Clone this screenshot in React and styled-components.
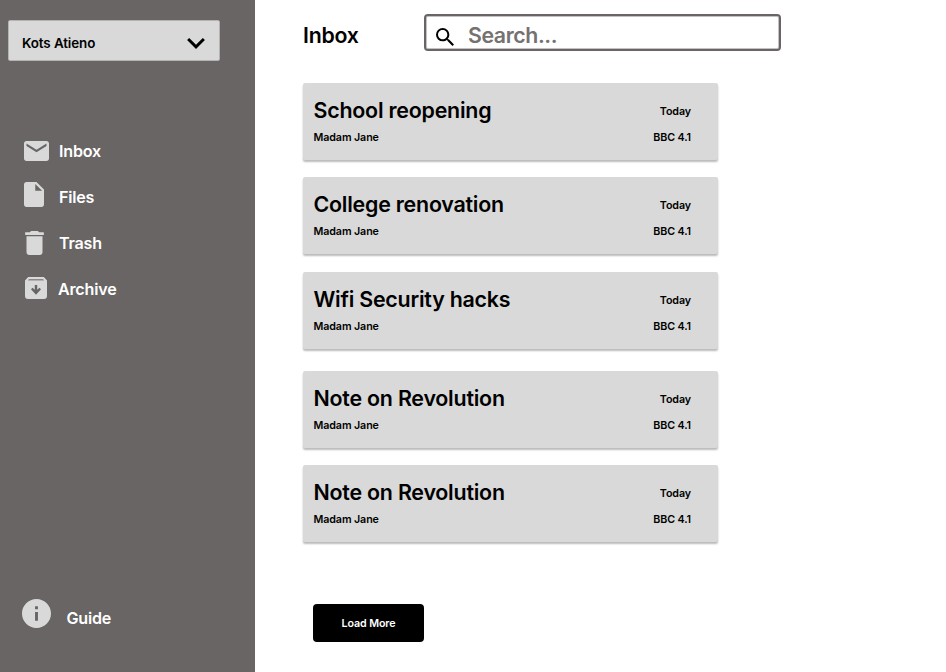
import React from "react";
import styled, { createGlobalStyle } from "styled-components";

const GlobalStyle = createGlobalStyle`
  * { box-sizing: border-box; }
  body { margin: 0; background: #fff; font-family: Inter, sans-serif; font-weight: 600; color: #000; }
  button, input { font: inherit; }
`;

const Page = styled.div`
  display: flex;
  width: 946px;
  height: 672px;
  overflow: hidden;
`;

const Sidebar = styled.aside`
  display: flex;
  flex-direction: column;
  flex: none;
  width: 255px;
  padding: 20px 35px 31px 8px;
  background: #696564;
`;

const AccountSelect = styled.button`
  display: flex;
  align-items: center;
  justify-content: space-between;
  width: 212px;
  height: 41px;
  padding: 5px 14px 0 13px;
  border: 1px solid #b5b3b2;
  border-radius: 2px;
  background: #d9d9d9;
  color: #000;
  font-size: 13.4px;
  letter-spacing: -0.1px;
  line-height: 20px;
`;

const Nav = styled.nav`
  display: flex;
  flex-direction: column;
  margin-top: 67px;
`;

const NavItem = styled.a`
  display: flex;
  align-items: center;
  height: 46px;
  color: #fff;
  font-size: 16.1px;
  letter-spacing: -0.2px;
  line-height: 20px;
`;

const IconSlot = styled.span`
  display: flex;
  flex: none;
  width: ${(p) => p.$width}px;
  padding-left: ${(p) => p.$inset}px;
  padding-bottom: ${(p) => p.$lift || 0}px;
`;

const Glyph = styled.svg`
  display: block;
  flex: none;
  fill: ${(p) => p.$color || "#d9d9d9"};
`;

const Guide = styled(NavItem)`
  margin-top: auto;
`;

const Main = styled.main`
  flex: 1;
  padding: 14px 0 0 48px;
`;

const Header = styled.header`
  display: flex;
  align-items: center;
  height: 37px;
`;

const Heading = styled.h1`
  width: 121px;
  margin: 5px 0 0;
  font-size: 21.3px;
  font-weight: 600;
  letter-spacing: -0.25px;
  line-height: 26px;
`;

const SearchBox = styled.label`
  display: flex;
  align-items: center;
  gap: 14px;
  width: 357px;
  height: 37px;
  padding: 8px 10px 0 10px;
  border: 2px solid #696564;
  border-radius: 4px;
  box-shadow: inset 0 0 0 1px #c3c1c1;
`;

const SearchInput = styled.input`
  flex: 1;
  min-width: 0;
  height: 26px;
  margin-top: -3px;
  padding: 0;
  border: 0;
  outline: 0;
  background: none;
  font-size: 21.3px;
  letter-spacing: -0.4px;
  &::placeholder { color: #757170; opacity: 1; }
`;

const MessageList = styled.div`
  display: flex;
  flex-direction: column;
  margin-top: 32px;
`;

const MessageCard = styled.article`
  display: grid;
  grid-template-columns: 1fr auto;
  grid-template-rows: 28px 27px;
  width: 415px;
  height: 77px;
  margin-bottom: ${(p) => p.$gap}px;
  padding: 13px 27px 0 10.5px;
  border-radius: 2px;
  background: #d9d9d9;
  box-shadow: 0 2px 2px rgba(0, 0, 0, 0.27);
`;

const Title = styled.h2`
  margin: 0;
  font-size: 21.4px;
  font-weight: 600;
  letter-spacing: -0.22px;
  line-height: 28px;
`;

const Meta = styled.span`
  font-size: 10.7px;
  letter-spacing: -0.1px;
  line-height: ${(p) => (p.$upper ? 32 : 27)}px;
  text-align: ${(p) => (p.$end ? "right" : "left")};
`;

const LoadMore = styled.button`
  display: block;
  width: 111px;
  height: 38px;
  margin: 61px 0 0 10px;
  padding: 1px 0 0;
  border: 0;
  border-radius: 4px;
  background: #000;
  color: #fff;
  font-size: 10.7px;
  letter-spacing: -0.1px;
`;

const icons = {
  mail: { box: "2 4 20 16", w: 25, h: 20, d: "M20 4H4c-1.1 0-2 .9-2 2v12c0 1.100.9 2 2 2h16c1.100 0 2-.9 2-2V6c0-1.100-.9-2-2-2zm0 4-8 5-8-5V6l8 5 8-5v2z" },
  file: { box: "4 2 16 20", w: 20, h: 25, d: "M6 2c-1.100 0-2 .9-2 2v16c0 1.100.9 2 2 2h12c1.100 0 2-.9 2-2V8l-6-6H6zm7 7V3.500L18.500 9H13z" },
  trash: { box: "5 3 14 18", w: 19, h: 24, d: "M6 19c0 1.100.9 2 2 2h8c1.100 0 2-.9 2-2V7H6v12zM19 4h-3.500l-1-1h-5l-1 1H5v2h14V4z" },
  archive: { box: "3 3 18 18", w: 22, h: 22 },
  info: { box: "2 2 20 20", w: 29, h: 29, d: "M12 2C6.480 2 2 6.480 2 12s4.480 10 10 10 10-4.480 10-10S17.520 2 12 2zm1 15h-2v-6h2v6zm0-8h-2V7h2v2z" },
  search: { box: "3 3 17.500 17.500", w: 18, h: 18, d: "M15.500 14h-.79l-.28-.27A6.471 6.471 0 0 0 16 9.500 6.500 6.500 0 1 0 9.500 16c1.610 0 3.090-.59 4.230-1.570l.27.28v.79l5 4.990L20.490 19l-4.990-5zm-6 0C7.010 14 5 11.990 5 9.500S7.010 5 9.500 5 14 7.010 14 9.500 11.990 14 9.500 14z" },
  chevron: { box: "6 8.590 12 7.410", w: 18, h: 11, d: "M7.410 8.590 12 13.170l4.590-4.580L18 10l-6 6-6-6z" },
};

function Icon({ name, color }) {
  const { box, w, h, d } = icons[name];
  return (
    <Glyph viewBox={box} width={w} height={h} $color={color} aria-hidden="true">
      {name === "archive" ? (
        <>
          <path d="M5.600 3h12.800L21 5.900V18.500a2.500 2.500 0 0 1-2.500 2.500h-13A2.500 2.500 0 0 1 3 18.500V5.900z" />
          <path fill="#8b8887" d="M6.200 4.600h11.600l.8 1.200H5.400z" />
          <path fill="#696564" d="M11 9.600h2v3.900l1.800-1.700 1.300 1.300L12 17.500l-4.100-4.400 1.300-1.300L11 13.500z" />
        </>
      ) : (
        <path d={d} />
      )}
    </Glyph>
  );
}

const navItems = [
  { icon: "mail", label: "Inbox", inset: 16, width: 51, lift: 0 },
  { icon: "file", label: "Files", inset: 16, width: 51, lift: 5 },
  { icon: "trash", label: "Trash", inset: 16.5, width: 51, lift: 0 },
  { icon: "archive", label: "Archive", inset: 17, width: 50, lift: 2 },
];

const messages = [
  { title: "School reopening", gap: 17.4 },
  { title: "College renovation", gap: 17.6 },
  { title: "Wifi Security hacks", gap: 22 },
  { title: "Note on Revolution", gap: 17.4 },
  { title: "Note on Revolution", gap: 0.6 },
];

export default function App() {
  return (
    <Page>
      <GlobalStyle />
      <Sidebar>
        <AccountSelect>
          Kots Atieno
          <Icon name="chevron" color="#000" />
        </AccountSelect>
        <Nav>
          {navItems.map((item) => (
            <NavItem key={item.label}>
              <IconSlot $inset={item.inset} $width={item.width} $lift={item.lift}>
                <Icon name={item.icon} />
              </IconSlot>
              {item.label}
            </NavItem>
          ))}
        </Nav>
        <Guide>
          <IconSlot $inset={14} $width={58.5} $lift={10}>
            <Icon name="info" />
          </IconSlot>
          Guide
        </Guide>
      </Sidebar>
      <Main>
        <Header>
          <Heading>Inbox</Heading>
          <SearchBox>
            <Icon name="search" color="#000" />
            <SearchInput placeholder="Search..." />
          </SearchBox>
        </Header>
        <MessageList>
          {messages.map((message, index) => (
            <MessageCard key={index} $gap={message.gap}>
              <Title>{message.title}</Title>
              <Meta $upper $end>Today</Meta>
              <Meta>Madam Jane</Meta>
              <Meta $end>BBC 4.1</Meta>
            </MessageCard>
          ))}
        </MessageList>
        <LoadMore>Load More</LoadMore>
      </Main>
    </Page>
  );
}
